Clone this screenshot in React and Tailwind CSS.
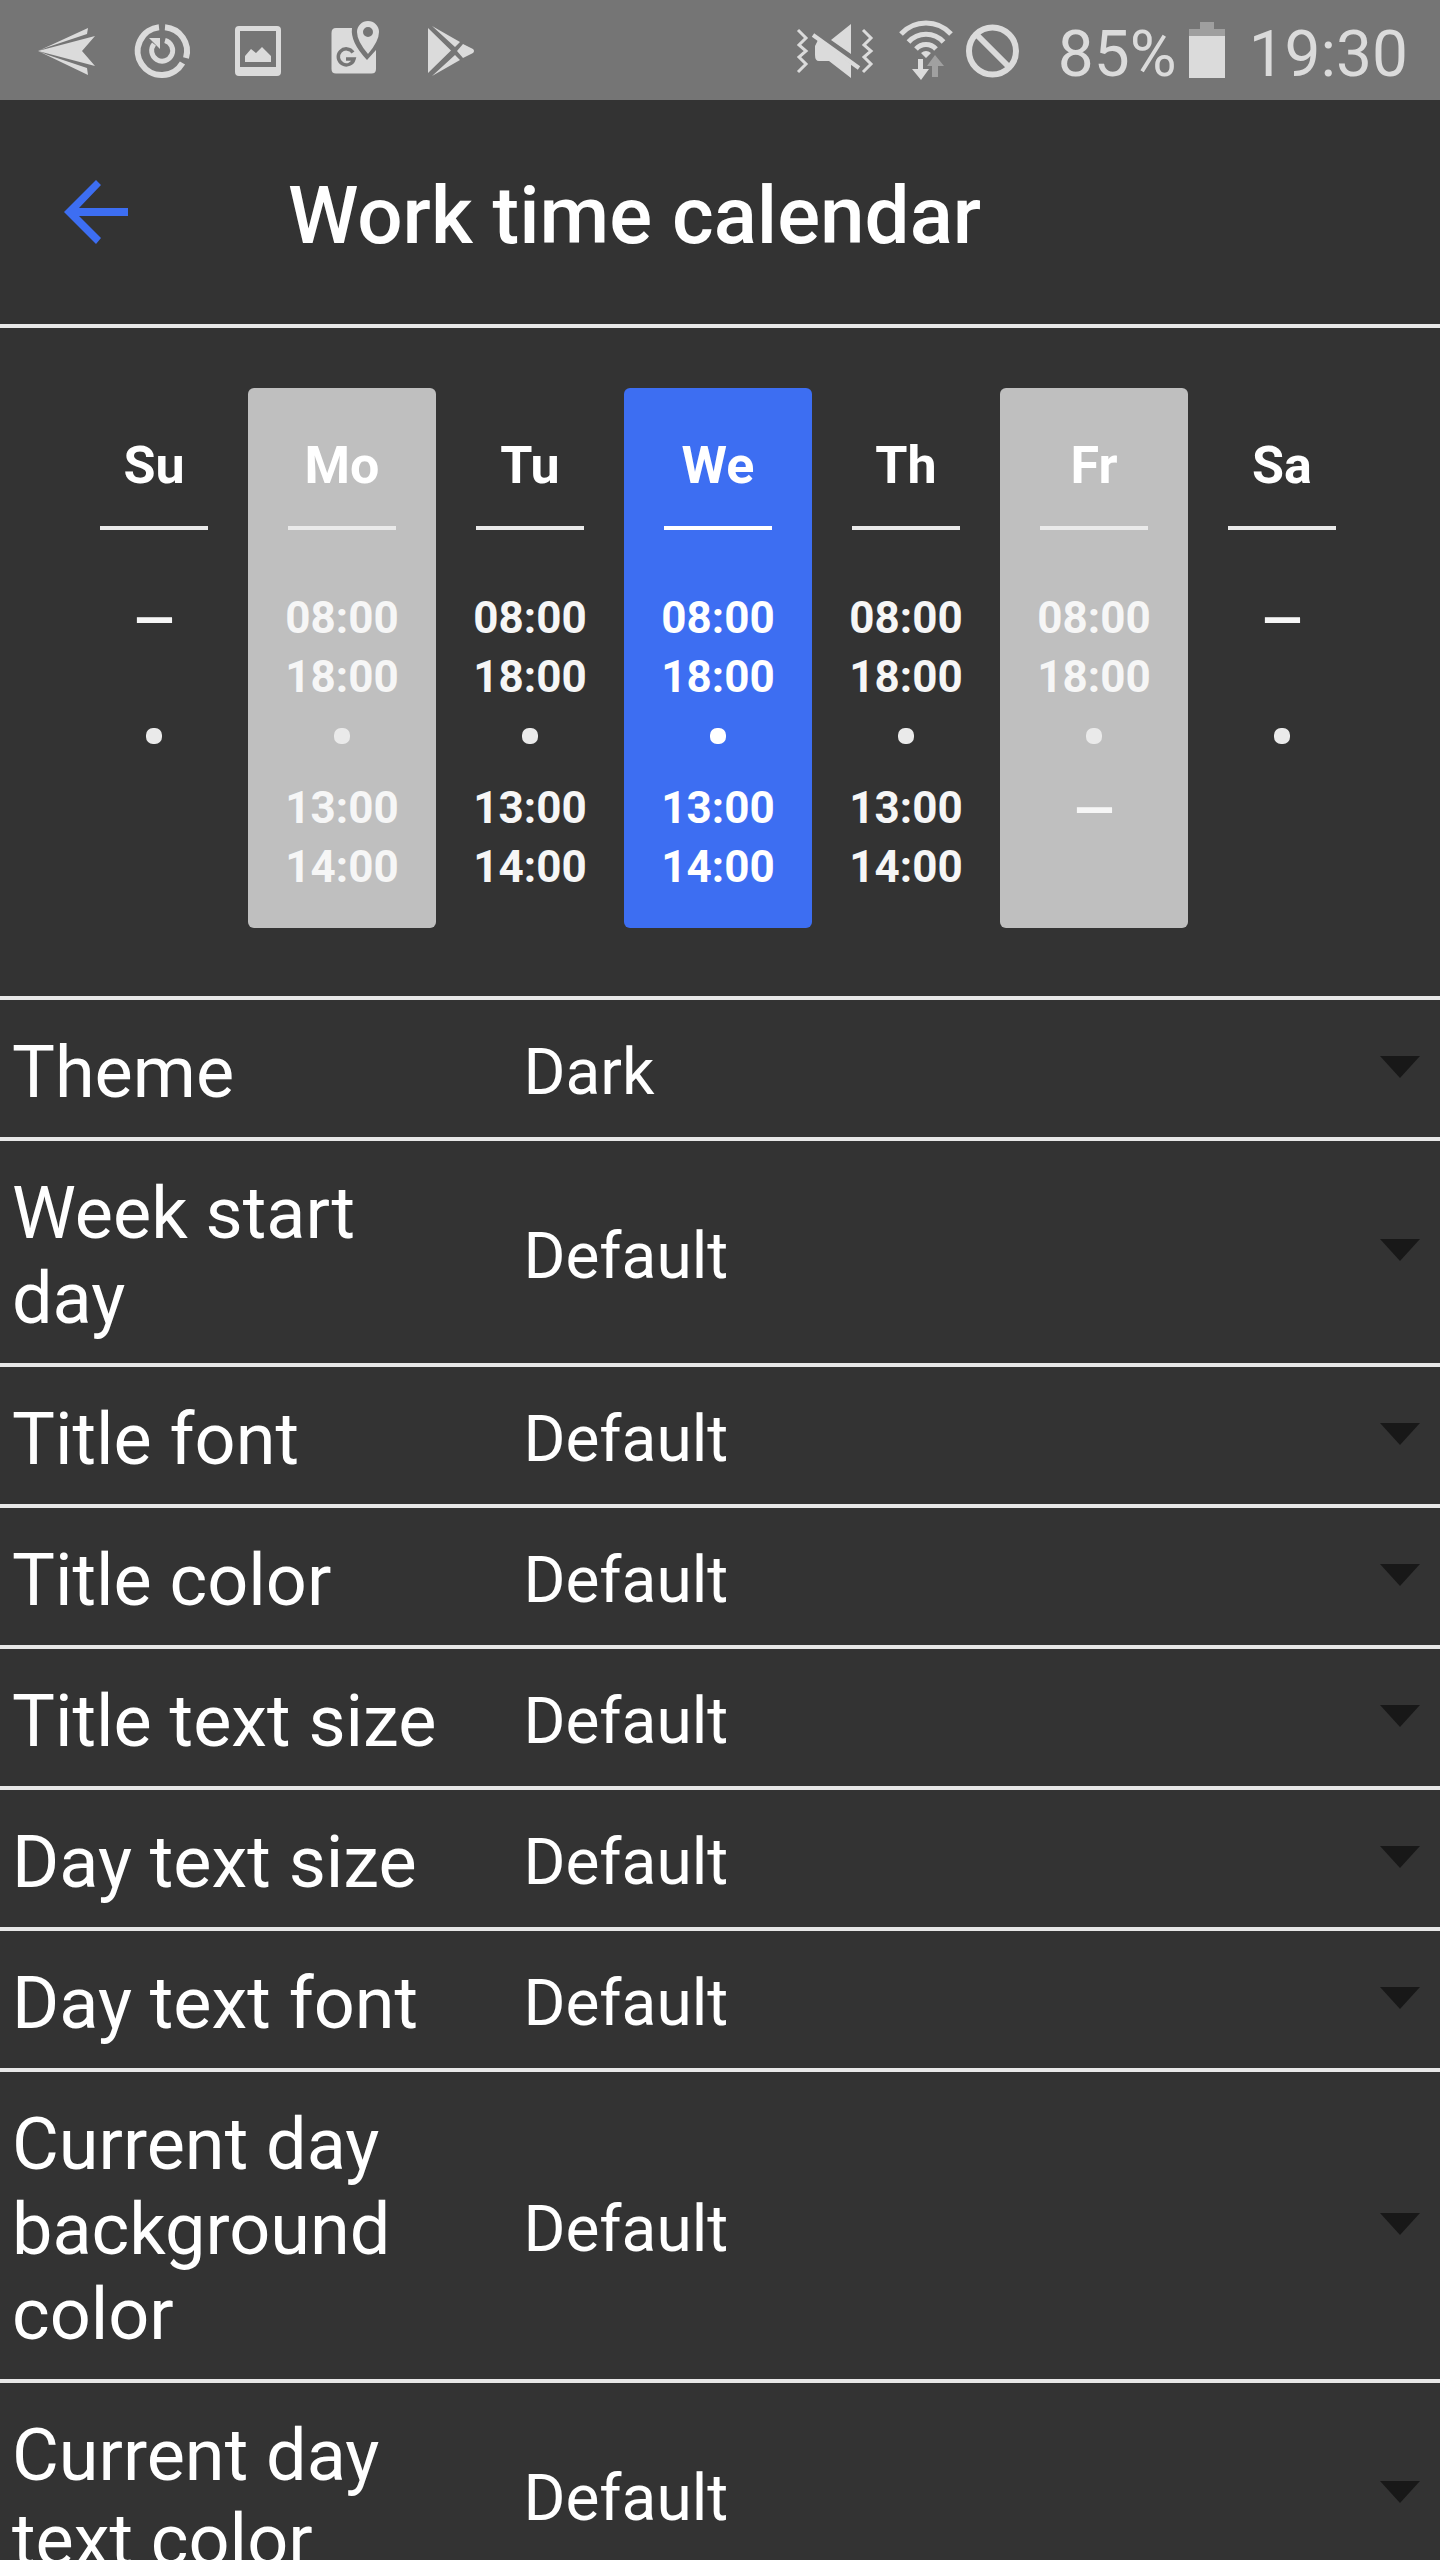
const DAYS = [
  { name: "Su", work: [], rest: null },
  { name: "Mo", tone: "muted", work: ["08:00", "18:00"], rest: ["13:00", "14:00"] },
  { name: "Tu", work: ["08:00", "18:00"], rest: ["13:00", "14:00"] },
  { name: "We", tone: "current", work: ["08:00", "18:00"], rest: ["13:00", "14:00"] },
  { name: "Th", work: ["08:00", "18:00"], rest: ["13:00", "14:00"] },
  { name: "Fr", tone: "muted", work: ["08:00", "18:00"], rest: [] },
  { name: "Sa", work: [], rest: null },
];

const SETTINGS = [
  ["Theme", "Dark"],
  ["Week start day", "Default"],
  ["Title font", "Default"],
  ["Title color", "Default"],
  ["Title text size", "Default"],
  ["Day text size", "Default"],
  ["Day text font", "Default"],
  ["Current day background color", "Default"],
  ["Current day text color", "Default"],
];

const CARD = { muted: "bg-[#bfbfbf]", current: "bg-[#3d6ef2]" };

function Times({ values }) {
  if (!values) return null;
  if (values.length === 0) return <p className="text-[52px] leading-[64px]">—</p>;
  return values.map((v) => <p key={v}>{v}</p>);
}

function Day({ day }) {
  const current = day.tone === "current";
  const ink = current ? "text-white" : "text-[#f6f6f6]";
  const mark = current ? "bg-white" : "bg-[#eaeaea]";
  return (
    <li className={`flex h-[540px] flex-1 flex-col items-center rounded-md pt-12 ${CARD[day.tone] || ""}`}>
      <h2 className="text-[52px] leading-[60px] font-bold text-white">{day.name}</h2>
      <div className={`mt-[30px] h-1 w-[108px] ${mark}`} />
      <div className={`mt-[59px] h-[118px] text-center text-[44px] leading-[59px] font-bold ${ink}`}>
        <Times values={day.work} />
      </div>
      <div className={`mt-[21px] size-4 rounded-[7px] ${mark}`} />
      <div className={`mt-[35px] text-center text-[44px] leading-[59px] font-bold ${ink}`}>
        <Times values={day.rest} />
      </div>
    </li>
  );
}

function Setting({ label, value, id }) {
  return (
    <div className="flex shrink-0 items-center border-t-4 border-[#e8e8e8] pt-[30px] pb-[22px]">
      <label htmlFor={id} className="w-[36%] pl-3 pr-12 text-[72px] leading-[85px]">
        {label}
      </label>
      <div className="relative flex flex-1 items-center">
        <select id={id} defaultValue={value} className="w-full appearance-none bg-transparent pl-[5px] text-[64px] leading-[75px] outline-none">
          <option>{value}</option>
        </select>
        <svg className="pointer-events-none absolute right-5 mb-3 h-[22px] w-10" viewBox="0 0 40 22" fill="#181818">
          <path d="M0 0H40L20 22Z" />
        </svg>
      </div>
    </div>
  );
}

export default function App() {
  return (
    <div className="flex h-screen flex-col overflow-hidden bg-[#333333] font-['Roboto',sans-serif] text-white">
      <div className="flex h-[100px] shrink-0 items-center justify-between bg-[#757575] pr-8 pl-[38px] text-[#dbdbdb]">
        <svg className="h-[60px] w-[440px]" viewBox="38 20 440 60" fill="currentColor">
          <path d="M38 51L88 28L87 34L48 47Z M38 51L95 36L82 51L95 66Z M38 51L88 75L87 68L48 55Z" />
          <path d="M165 27.200A24 24 0 0 1 186 58" fill="none" stroke="currentColor" strokeWidth="6" />
          <path d="M159 27.200A24 24 0 1 0 182.500 63" fill="none" stroke="currentColor" strokeWidth="6" />
          <path d="M165 40.500A10.500 10.500 0 1 1 154 44" fill="none" stroke="currentColor" strokeWidth="5" />
          <path d="M149 38H160V49L156 45Z" />
          <path fillRule="evenodd" d="M239 26H277Q281 26 281 30V72Q281 76 277 76H239Q235 76 235 72V30Q235 26 239 26ZM240 31V67H276V31Z" />
          <path d="M245 56L251 49L256 53L262 47L271 56V62H245Z" />
          <path d="M336 28H352Q350 42 367 60L376 50V69Q376 73.500 371.500 73.500H336Q331.500 73.500 331.500 69V33Q331.500 28 336 28Z" />
          <path d="M353 52.500A8 8 0 1 0 354 59H346" fill="none" stroke="#757575" strokeWidth="3.500" />
          <path fillRule="evenodd" d="M368 21A11 11 0 0 1 379 32Q379 41 368 54Q357 41 357 32A11 11 0 0 1 368 21ZM368 27A5 5 0 1 0 368 37A5 5 0 1 0 368 27Z" />
          <path d="M428 28L451 50.500L428 73Z M432 26L460 42L455 47Z M432 76L460 60L455 55Z M463 44L473 49Q475 51 473 53L463 58L457 51Z" />
        </svg>
        <div className="flex items-center">
          <svg className="h-[60px] w-[224px]" viewBox="797 20 224 60" fill="currentColor">
            <path d="M799 30L807 38L800 45L807 51L800 57L807 64L799 72 M864 30L872 38L865 45L872 51L865 57L872 64L864 72" fill="none" stroke="currentColor" strokeWidth="3" />
            <path d="M852 24V54L832 40Z M819 40L852 64V78L830 61H820Q816 61 816 55V46Z" />
            <path d="M814 35L860 68" stroke="currentColor" strokeWidth="4" />
            <path d="M902 34A34 34 0 0 1 952 34 M909.500 42A23.500 23.500 0 0 1 944.500 42 M917 49A13.500 13.500 0 0 1 937 49" fill="none" stroke="currentColor" strokeWidth="5" />
            <path d="M922 53Q927 49 932 53L927 58Z M919 59H924V69H930L922 80L913 69H919Z" />
            <path d="M936 55L945 66H939V77H933V66H928Z" fill="#a0a0a0" />
            <circle cx="993.500" cy="51" r="23.500" fill="none" stroke="currentColor" strokeWidth="6" />
            <path d="M977 34L1010 67" stroke="currentColor" strokeWidth="6" />
          </svg>
          <span className="ml-[38px] pt-2 text-[64px] leading-[75px]">85%</span>
          <svg className="ml-3 h-14 w-9" viewBox="0 0 36 56">
            <path d="M11 0H25V7H36V14H0V7H11Z" fill="#9f9f9f" />
            <path d="M0 14H36V56H0Z" fill="#dbdbdb" />
          </svg>
          <time className="ml-6 pt-2 text-[64px] leading-[75px]">19:30</time>
        </div>
      </div>

      <header className="flex h-[224px] shrink-0 items-center">
        <button type="button" aria-label="Back" className="ml-16">
          <svg className="size-16" viewBox="0 0 64 64" fill="#3d6ef2">
            <path d="M64 28H15L37 5L32 0L0 32L32 64L37 58L15 36H64Z" />
          </svg>
        </button>
        <h1 className="ml-40 pt-2 text-[80px] leading-[94px] font-medium">Work time calendar</h1>
      </header>

      <ul className="flex shrink-0 border-t-4 border-[#e8e8e8] pt-[60px] pr-16 pb-[68px] pl-[60px]">
        {DAYS.map((d) => (
          <Day key={d.name} day={d} />
        ))}
      </ul>

      <main className="flex min-h-0 flex-1 flex-col overflow-y-auto [scrollbar-width:none]">
        {SETTINGS.map(([label, value], i) => (
          <Setting key={label} id={`setting-${i}`} label={label} value={value} />
        ))}
      </main>
    </div>
  );
}
